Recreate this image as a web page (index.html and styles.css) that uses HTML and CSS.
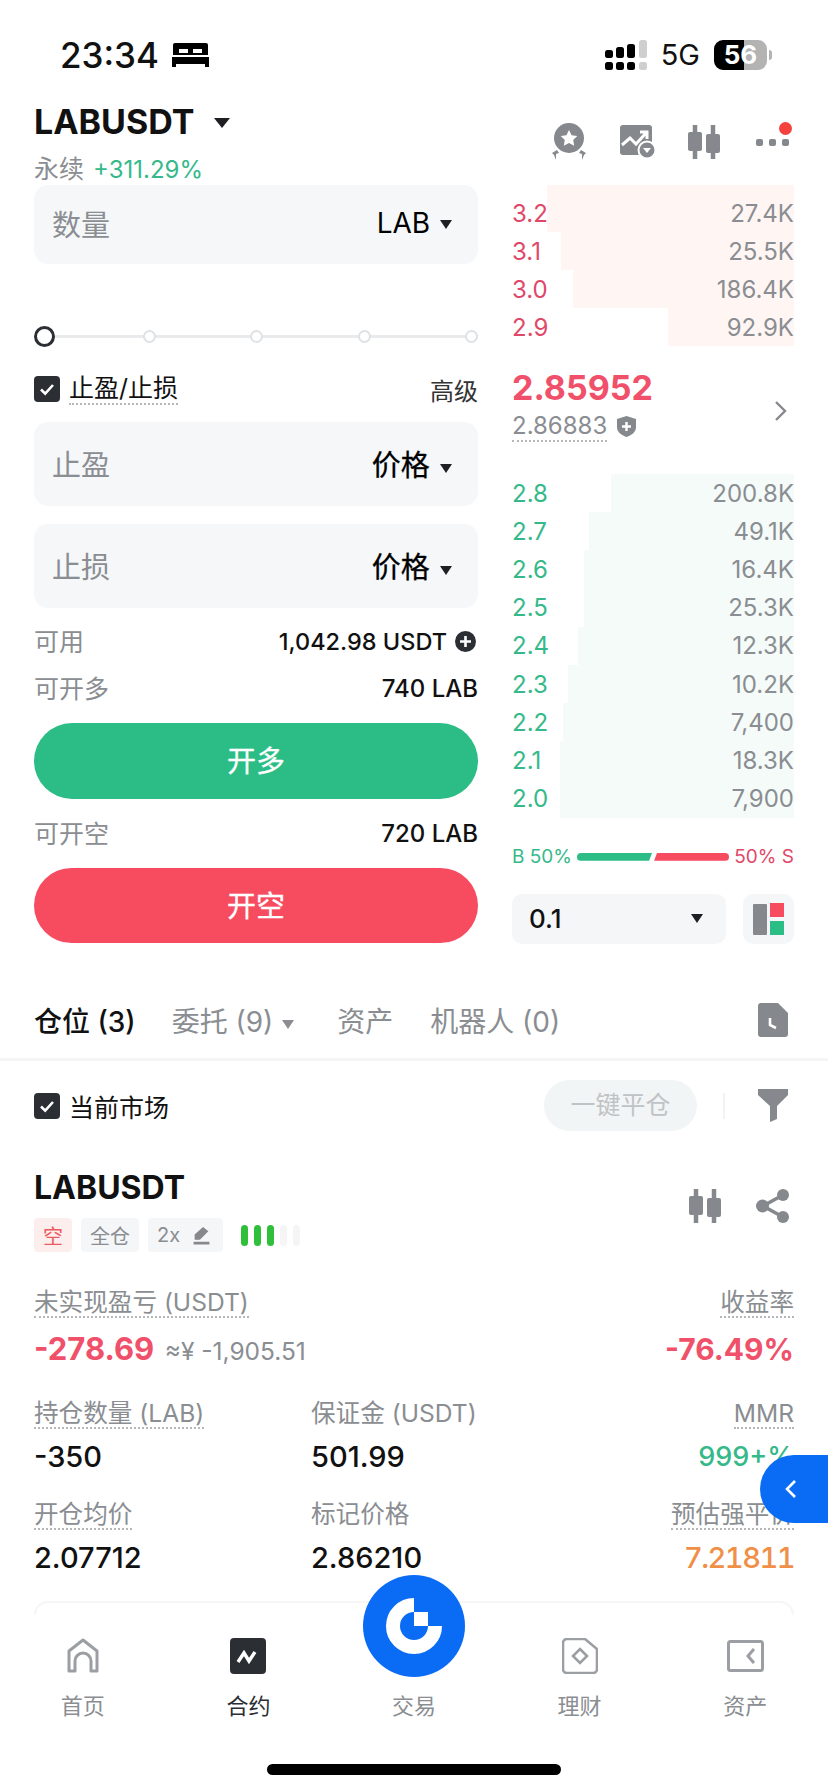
FILE: index.html
```html
<!DOCTYPE html>
<html lang="zh-CN">
<head>
    <meta charset="UTF-8">
    <meta name="viewport" content="width=device-width, initial-scale=1.0">
    <title>LABUSDT</title>
    <link rel="stylesheet" href="styles.css">
</head>
<body>
<svg class="defs" width="0" height="0">
    <symbol id="candles" viewBox="0 0 32 34">
        <path d="M7 0v34M25 0v34" stroke="#85888c" stroke-width="4.5" stroke-linecap="round"/>
        <rect x="0" y="7" width="14" height="19" rx="2" fill="#85888c"/>
        <rect x="18" y="9" width="14" height="19" rx="2" fill="#85888c"/>
    </symbol>
    <symbol id="check" viewBox="0 0 26 26">
        <rect width="26" height="26" rx="4" fill="#2b2e33"/>
        <path d="M7 13.5l4.2 4.2L19 9" fill="none" stroke="#fff" stroke-width="2.6"/>
    </symbol>
</svg>

<div class="phone">
    <!-- Status bar -->
    <div class="status">
        <div class="status-left">
            <span class="time">23:34</span>
            <svg width="37" height="26" viewBox="0 0 37 26"><path d="M3 1h31a2 2 0 0 1 2 2v10H1V3a2 2 0 0 1 2-2zM0 15h37v10h-4v-3H4v3H0z" fill="#000"/><rect x="7" y="7" width="9" height="4" fill="#fff"/><rect x="21" y="7" width="9" height="4" fill="#fff"/></svg>
        </div>
        <div class="status-right">
            <svg width="42" height="30" viewBox="0 0 42 30">
                <rect x="0" y="10" width="8" height="8" rx="2.5"/><rect x="11" y="7" width="8" height="11" rx="2.5"/><rect x="22" y="4" width="8" height="14" rx="2.5"/><rect x="34" y="0" width="8" height="18" rx="2.5" fill="#cfcfcf"/>
                <rect x="0" y="22" width="8" height="8" rx="2.5"/><rect x="11" y="22" width="8" height="8" rx="2.5"/><rect x="22" y="22" width="8" height="8" rx="2.5"/><rect x="34" y="22" width="8" height="8" rx="2.5" fill="#cfcfcf"/>
            </svg>
            <span class="net">5G</span>
            <span class="battery">56</span>
            <i class="battery-tip"></i>
        </div>
    </div>

    <!-- Symbol header -->
    <div class="header">
        <div>
            <div class="symbol">LABUSDT <i class="caret caret-lg"></i></div>
            <div class="symbol-sub"><span class="muted">永续</span> <span class="up">+311.29%</span></div>
        </div>
        <div class="header-icons">
            <svg width="38" height="38" viewBox="0 0 38 38">
                <circle cx="19" cy="15" r="15" fill="#85888c"/>
                <path d="M19 7l2.6 5.2 5.7.8-4.1 4 1 5.7-5.2-2.7-5.2 2.7 1-5.7-4.1-4 5.7-.8z" fill="#fff"/>
                <path d="M2 30l5-3 2 3-3 1 0 6-2-5zM36 30l-5-3-2 3 3 1 0 6 2-5z" fill="#85888c"/>
            </svg>
            <svg width="36" height="34" viewBox="0 0 36 34">
                <rect x="0" y="0" width="32" height="30" rx="3" fill="#85888c"/>
                <path d="M2 20l8-7 6 6 10-11M20 7h7v7" fill="none" stroke="#fff" stroke-width="3"/>
                <circle cx="27" cy="25" r="8.5" fill="#85888c" stroke="#fff" stroke-width="2"/>
                <path d="M23 23h8l-4 5z" fill="#fff"/>
            </svg>
            <svg width="32" height="34"><use href="#candles"/></svg>
            <div class="more">
                <i></i><i></i><i></i>
                <b class="more-dot"></b>
            </div>
        </div>
    </div>

    <div class="trade">
        <!-- Order form -->
        <div class="form">
            <div class="field">
                <span class="field-label">数量</span>
                <span class="field-unit unit-sm">LAB <i class="caret"></i></span>
            </div>
            <div class="slider">
                <i class="knob"></i><i></i><i></i><i></i><i></i>
            </div>
            <div class="check-row">
                <svg class="checkbox"><use href="#check"/></svg>
                <span class="dotted tpsl">止盈/止损</span>
                <span class="adv">高级</span>
            </div>
            <div class="field field-tall field-tp">
                <span class="field-label">止盈</span>
                <span class="field-unit">价格 <i class="caret"></i></span>
            </div>
            <div class="field field-tall field-sl">
                <span class="field-label">止损</span>
                <span class="field-unit">价格 <i class="caret"></i></span>
            </div>
            <div class="info info-avail">
                <span class="muted">可用</span>
                <span class="info-val">1,042.98 USDT
                    <svg width="21" height="21" viewBox="0 0 21 21"><circle cx="10.5" cy="10.5" r="10.5" fill="#2b2e33"/><path d="M10.5 5v11M5 10.5h11" stroke="#fff" stroke-width="2.6"/></svg>
                </span>
            </div>
            <div class="info info-long">
                <span class="muted">可开多</span>
                <span class="info-val">740 LAB</span>
            </div>
            <div class="btn btn-long">开多</div>
            <div class="info info-short">
                <span class="muted">可开空</span>
                <span class="info-val">720 LAB</span>
            </div>
            <div class="btn btn-short">开空</div>
        </div>

        <!-- Order book -->
        <div class="book">
            <div class="asks">
                <div class="row"><i class="depth" style="width:87.6%"></i><span>3.2</span><span class="qty">27.4K</span></div>
                <div class="row"><i class="depth" style="width:82.6%"></i><span>3.1</span><span class="qty">25.5K</span></div>
                <div class="row"><i class="depth" style="width:78.4%"></i><span>3.0</span><span class="qty">186.4K</span></div>
                <div class="row"><i class="depth" style="width:44.7%"></i><span>2.9</span><span class="qty">92.9K</span></div>
            </div>
            <div class="last">
                <div>
                    <div class="last-price">2.85952</div>
                    <div class="mark"><span class="dotted">2.86883</span>
                        <svg width="19" height="21" viewBox="0 0 19 21"><path d="M9.5 0L19 3v8c0 5-4 8-9.5 10C4 19 0 16 0 11V3z" fill="#85888c"/><path d="M9.5 6v9M5 10.5h9" stroke="#fff" stroke-width="2.4"/></svg>
                    </div>
                </div>
                <svg class="chev" width="14" height="22" viewBox="0 0 14 22"><path d="M2 2l9 9-9 9" fill="none" stroke="#85888c" stroke-width="2.4"/></svg>
            </div>
            <div class="bids">
                <div class="row"><i class="depth" style="width:65%"></i><span>2.8</span><span class="qty">200.8K</span></div>
                <div class="row"><i class="depth" style="width:72.7%"></i><span>2.7</span><span class="qty">49.1K</span></div>
                <div class="row"><i class="depth" style="width:74.5%"></i><span>2.6</span><span class="qty">16.4K</span></div>
                <div class="row"><i class="depth" style="width:74.5%"></i><span>2.5</span><span class="qty">25.3K</span></div>
                <div class="row"><i class="depth" style="width:76.6%"></i><span>2.4</span><span class="qty">12.3K</span></div>
                <div class="row"><i class="depth" style="width:80.1%"></i><span>2.3</span><span class="qty">10.2K</span></div>
                <div class="row"><i class="depth" style="width:81.9%"></i><span>2.2</span><span class="qty">7,400</span></div>
                <div class="row"><i class="depth" style="width:83%"></i><span>2.1</span><span class="qty">18.3K</span></div>
                <div class="row"><i class="depth" style="width:83%"></i><span>2.0</span><span class="qty">7,900</span></div>
            </div>
            <div class="ratio">
                <span class="up">B 50%</span>
                <i class="bar bar-buy"></i>
                <i class="bar bar-sell"></i>
                <span class="down">50% S</span>
            </div>
            <div class="book-tools">
                <div class="precision"><span>0.1</span><i class="caret"></i></div>
                <div class="layout-btn">
                    <svg width="31" height="32" viewBox="0 0 31 32"><rect x="0" y="1" width="14" height="31" rx="1" fill="#85888c"/><rect x="17" y="0" width="14" height="14" fill="#f74b60"/><rect x="17" y="18" width="14" height="14" fill="#2bbd85"/></svg>
                </div>
            </div>
        </div>
    </div>

    <!-- Tabs -->
    <div class="tabs">
        <span class="tab tab-active">仓位 (3)</span>
        <span class="tab tab-orders">委托 (9) <i class="caret caret-gray"></i></span>
        <span class="tab tab-assets">资产</span>
        <span class="tab tab-bots">机器人 (0)</span>
        <svg class="tab-doc" width="30" height="34" viewBox="0 0 30 34"><path d="M3 0h17l10 10v21a3 3 0 0 1-3 3H3a3 3 0 0 1-3-3V3a3 3 0 0 1 3-3z" fill="#85888c"/><path d="M12 15v7l6 3" fill="none" stroke="#fff" stroke-width="2.6"/></svg>
    </div>

    <div class="filter">
        <svg class="checkbox"><use href="#check"/></svg>
        <span class="filter-label">当前市场</span>
        <span class="close-all">一键平仓</span>
        <i class="filter-sep"></i>
        <svg width="30" height="33" viewBox="0 0 30 33"><path d="M0 0h30v6L19 17v13l-7 3V17L0 6z" fill="#85888c"/></svg>
    </div>

    <!-- Position card -->
    <div class="position">
        <div class="pos-head">
            <div>
                <div class="pos-symbol">LABUSDT</div>
                <div class="tags">
                    <span class="tag tag-short">空</span>
                    <span class="tag">全仓</span>
                    <span class="tag tag-lev">2x
                        <svg width="19" height="19" viewBox="0 0 17 18"><path d="M10 1l5 4-8 8H2v-5zM1 15h15v2.5H1z" fill="#85888c"/></svg>
                    </span>
                    <span class="risk"><i class="on"></i><i class="on"></i><i class="on"></i><i></i><i></i></span>
                </div>
            </div>
            <div class="pos-icons">
                <svg width="32" height="34"><use href="#candles"/></svg>
                <svg width="34" height="34" viewBox="0 0 34 34"><path d="M27 6L7 17l20 11" fill="none" stroke="#85888c" stroke-width="3.5"/><circle cx="27" cy="6" r="6" fill="#85888c"/><circle cx="6.5" cy="17" r="6.5" fill="#85888c"/><circle cx="27" cy="28" r="6" fill="#85888c"/></svg>
            </div>
        </div>

        <div class="pnl">
            <div>
                <div class="label"><span class="dotted">未实现盈亏 (USDT)</span></div>
                <div class="pnl-val"><b class="down-strong">-278.69</b> <span class="muted pnl-cny">≈¥ -1,905.51</span></div>
            </div>
            <div class="right">
                <div class="label"><span class="dotted">收益率</span></div>
                <div class="pnl-val"><b class="down-strong roe">-76.49%</b></div>
            </div>
        </div>

        <div class="stats">
            <div>
                <div class="label"><span class="dotted">持仓数量 (LAB)</span></div>
                <div class="stat-val">-350</div>
            </div>
            <div>
                <div class="label">保证金 (USDT)</div>
                <div class="stat-val">501.99</div>
            </div>
            <div class="right">
                <div class="label"><span class="dotted">MMR</span></div>
                <div class="stat-val up-strong">999+%</div>
            </div>
            <div>
                <div class="label"><span class="dotted">开仓均价</span></div>
                <div class="stat-val">2.07712</div>
            </div>
            <div>
                <div class="label">标记价格</div>
                <div class="stat-val">2.86210</div>
            </div>
            <div class="right">
                <div class="label"><span class="dotted">预估强平价</span></div>
                <div class="stat-val orange">7.21811</div>
            </div>
        </div>
        <div class="next-card"></div>
    </div>

    <!-- Floating tab on the right edge -->
    <div class="side-tab">
        <svg width="12" height="20" viewBox="0 0 12 20"><path d="M10 2l-8 8 8 8" fill="none" stroke="#fff" stroke-width="2.6"/></svg>
    </div>

    <!-- Bottom navigation -->
    <div class="nav">
        <div class="nav-item">
            <svg width="36" height="36" viewBox="0 0 36 36"><path d="M4 33V13L18 2l14 11v20h-6V23a8 8 0 0 0-16 0v10z" fill="none" stroke="#9b9ea2" stroke-width="3" stroke-linejoin="round"/></svg>
            <span>首页</span>
        </div>
        <div class="nav-item nav-active">
            <svg width="36" height="36" viewBox="0 0 36 36"><rect width="36" height="36" rx="4" fill="#2b2e33"/><path d="M8 24l6-9 5 8 6-9" fill="none" stroke="#fff" stroke-width="3.4"/></svg>
            <span>合约</span>
        </div>
        <div class="nav-item">
            <i class="nav-spacer"></i>
            <span>交易</span>
        </div>
        <div class="nav-item">
            <svg width="36" height="36" viewBox="0 0 36 36"><path d="M5 1h18l12 10v20a4 4 0 0 1-4 4H5a4 4 0 0 1-4-4V5a4 4 0 0 1 4-4z" fill="none" stroke="#9b9ea2" stroke-width="2.6"/><path d="M18 11l7 7-7 7-7-7z" fill="none" stroke="#9b9ea2" stroke-width="2.6"/></svg>
            <span>理财</span>
        </div>
        <div class="nav-item">
            <svg width="37" height="32" viewBox="0 0 37 32"><rect x="1.5" y="1.5" width="34" height="29" rx="2" fill="none" stroke="#9b9ea2" stroke-width="3"/><path d="M27 9l-6 7 6 7" fill="none" stroke="#9b9ea2" stroke-width="3"/></svg>
            <span>资产</span>
        </div>
    </div>

    <div class="fab">
        <svg width="102" height="102" viewBox="0 0 102 102">
            <path d="M51 30A21 21 0 1 0 72 51" fill="none" stroke="#fff" stroke-width="14"/>
            <rect x="51" y="37" width="14" height="14" fill="#fff"/>
        </svg>
    </div>

    <div class="home-bar"></div>
</div>
</body>
</html>
```

FILE: styles.css
```css
* {
    box-sizing: border-box;
}

body {
    margin: 0;
    background: #fff;
    font-family: Inter, "Noto Sans CJK SC", sans-serif;
    color: #111;
}

.defs {
    display: block;
}

.phone {
    position: relative;
    width: 828px;
    height: 1792px;
    overflow: hidden;
    background: #fff;
}

i {
    display: block;
    font-style: normal;
}

.muted { color: #8a8d91; }
.up { color: #35b98a; }
.down { color: #e0486a; }
.right { text-align: right; }

.dotted {
    display: inline-block;
    border-bottom: 2px dotted #b5b7ba;
}

.caret {
    display: inline-block;
    width: 0;
    height: 0;
    border-left: 6.5px solid transparent;
    border-right: 6.5px solid transparent;
    border-top: 9px solid #1d1f22;
    vertical-align: middle;
}

.caret-lg {
    border-left-width: 8px;
    border-right-width: 8px;
    border-top-width: 10px;
    margin-left: 12px;
    vertical-align: 6px;
}

.caret-gray {
    border-left-width: 6px;
    border-right-width: 6px;
    border-top-color: #8a8d91;
}

/* status bar */
.status {
    height: 102px;
    padding: 40px 56px 0 60px;
    display: flex;
    justify-content: space-between;
    align-items: flex-start;
}

.status-left {
    display: flex;
    align-items: center;
    gap: 13px;
    height: 30px;
}

.time {
    font-size: 35px;
    font-weight: 500;
    line-height: 30px;
}

.status-right {
    display: flex;
    align-items: center;
    height: 30px;
}

.net {
    font-size: 29px;
    margin-left: 14px;
    margin-right: 14px;
    line-height: 30px;
}

.battery {
    width: 53px;
    height: 30px;
    border-radius: 9px;
    background: linear-gradient(90deg, #000 56%, #b3b3b3 56%);
    color: #fff;
    font-size: 26px;
    font-weight: 700;
    line-height: 30px;
    text-align: center;
}

.battery-tip {
    width: 3px;
    height: 10px;
    margin-left: 2px;
    background: #b3b3b3;
    border-radius: 0 3px 3px 0;
}

/* header */
.header {
    height: 83px;
    padding: 0 38px 0 34px;
    display: flex;
    justify-content: space-between;
}

.symbol {
    font-size: 34px;
    font-weight: 700;
    line-height: 40px;
}

.symbol-sub {
    margin-top: 12px;
    line-height: 30px;
    font-size: 25px;
}

.symbol-sub .up {
    margin-left: 2px;
    font-size: 24px;
}

.header-icons {
    height: 58px;
    padding-top: 21px;
    display: flex;
    align-items: center;
    gap: 32px;
}

.more {
    position: relative;
    display: flex;
    gap: 6px;
    width: 34px;
    height: 37px;
    margin-left: 4px;
    padding-top: 16px;
}

.more i {
    width: 7px;
    height: 7px;
    border-radius: 2px;
    background: #85888c;
}

.more-dot {
    position: absolute;
    right: -2px;
    top: -1px;
    width: 13px;
    height: 13px;
    border-radius: 50%;
    background: #f4433f;
}

/* trade area */
.trade {
    display: grid;
    grid-template-columns: 444px 282px;
    column-gap: 34px;
    padding: 0 34px;
    height: 758px;
    margin-bottom: 57px;
}

.field {
    height: 79px;
    padding: 0 26px 4px 18px;
    display: flex;
    justify-content: space-between;
    align-items: center;
    background: #f5f7f9;
    border-radius: 14px;
}

.field-tall { height: 84px; padding-bottom: 2px; }
.field-tp { margin-top: 20px; }
.field-sl { margin-top: 18px; }

.field-label {
    font-size: 29px;
    color: #8a8d91;
}

.field-unit {
    font-size: 29px;
    font-weight: 400;
    color: #000;
    -webkit-text-stroke: 0.3px #000;
}

.field-unit .caret {
    margin-left: 2px;
}

.unit-sm {
    font-size: 28px;
    -webkit-text-stroke: 0;
}

.slider {
    margin-top: 62px;
    height: 21px;
    display: flex;
    align-items: center;
    gap: 94.5px;
    background: linear-gradient(#e8eaec, #e8eaec) center / 100% 3px no-repeat;
}

.slider i {
    width: 13px;
    height: 13px;
    border-radius: 50%;
    background: #fff;
    border: 2px solid #dfe2e4;
}

.slider .knob {
    width: 21px;
    height: 21px;
    border: 3px solid #2b2e33;
    margin-right: -7px;
}

.check-row {
    margin-top: 29px;
    height: 26px;
    display: flex;
    align-items: center;
}

.checkbox {
    width: 26px;
    height: 26px;
    flex: none;
}

.tpsl {
    margin-left: 9px;
    font-size: 25px;
    line-height: 30px;
}

.adv {
    margin-left: auto;
    font-size: 24px;
    color: #333;
}

.info {
    height: 34px;
    display: flex;
    justify-content: space-between;
    align-items: center;
    font-size: 25px;
}

.info .muted { padding-bottom: 3px; }

.info-avail { margin-top: 16px; }
.info-long { margin-top: 13px; }
.info-short { margin-top: 17px; }

.info-val {
    display: flex;
    align-items: center;
    gap: 8px;
    font-size: 24px;
    font-weight: 500;
}

.info-avail .info-val {
    padding-right: 2px;
    font-size: 23.5px;
}

.btn {
    margin-top: 18px;
    height: 76px;
    border-radius: 38px;
    color: #fff;
    font-size: 29px;
    font-weight: 400;
    line-height: 78px;
    text-align: center;
    -webkit-text-stroke: 0.3px #fff;
}

.btn-long { background: #2bbd85; }
.btn-short { background: #f74b60; height: 75px; }

/* order book */
.asks .row:first-child {
    height: 47px;
    padding-top: 9px;
}

.row {
    position: relative;
    height: 38px;
    display: flex;
    justify-content: space-between;
    align-items: center;
    font-size: 24px;
}

.row span {
    position: relative;
}

.depth {
    position: absolute;
    top: 0;
    right: 0;
    bottom: 0;
}

.asks .row { color: #e0486a; }
.asks .depth { background: #fff6f4; }
.bids { margin-top: 33px; }
.bids .row { height: 38.2px; color: #35b98a; }
.bids .depth { background: #f5fbf9; }
.qty { color: #8a8d91; }

.last {
    margin-top: 22px;
    height: 73px;
    display: flex;
    justify-content: space-between;
    align-items: center;
}

.last-price {
    font-size: 34px;
    font-weight: 700;
    color: #f0506a;
    line-height: 40px;
}

.mark {
    margin-top: 4px;
    display: flex;
    align-items: center;
    gap: 10px;
    font-size: 24px;
    color: #8a8d91;
}

.mark .dotted { line-height: 28px; }

.chev { margin-right: 6px; margin-top: 12px; }

.ratio {
    margin-top: 25px;
    height: 28px;
    display: flex;
    align-items: center;
    font-size: 19px;
    white-space: nowrap;
}

.bar {
    height: 8px;
    flex: 1;
}

.bar-buy {
    margin-left: 5px;
    background: #2bbd85;
    border-radius: 4px 0 0 4px;
    clip-path: polygon(0 0, 100% 0, 96% 100%, 0 100%);
}

.bar-sell {
    margin-left: 2px;
    margin-right: 5px;
    background: #f74b60;
    border-radius: 0 4px 4px 0;
    clip-path: polygon(4% 0, 100% 0, 100% 100%, 0 100%);
}

.book-tools {
    margin-top: 23px;
    display: flex;
    justify-content: space-between;
}

.precision {
    width: 214px;
    height: 50px;
    padding: 0 23px 0 17px;
    display: flex;
    justify-content: space-between;
    align-items: center;
    background: #f5f6f8;
    border-radius: 10px;
    font-size: 26px;
    font-weight: 500;
}

.layout-btn {
    width: 51px;
    height: 50px;
    display: flex;
    align-items: center;
    justify-content: center;
    background: #f5f6f8;
    border-radius: 10px;
}

/* tabs */
.tabs {
    display: flex;
    align-items: center;
    height: 61px;
    padding: 0 40px 18px 34px;
    border-bottom: 3px solid #f5f5f5;
    font-size: 28px;
    color: #8a8d91;
}

.tab { white-space: nowrap; }
.tab-active { color: #111; font-weight: 500; }
.tab-orders { margin-left: 36px; }
.tab-orders .caret { margin-left: 1px; }
.tab-assets { margin-left: 43px; }
.tab-bots { margin-left: 37px; }
.tab-doc { margin-left: auto; }

.filter {
    margin-top: 19px;
    height: 51px;
    padding: 0 40px 0 34px;
    display: flex;
    align-items: center;
}

.filter-label {
    margin-left: 9px;
    font-size: 25px;
}

.close-all {
    margin-left: auto;
    width: 153px;
    height: 51px;
    border-radius: 26px;
    background: #f2f5f6;
    color: #c0c3c6;
    font-size: 25px;
    line-height: 50px;
    text-align: center;
}

.filter-sep {
    width: 2px;
    height: 26px;
    margin: 0 33px 0 26px;
    background: #f2f3f4;
}

/* position */
.position {
    margin-top: 37px;
    padding: 0 34px;
}

.pos-head {
    display: flex;
    justify-content: space-between;
}

.pos-symbol {
    font-size: 32px;
    font-weight: 700;
    line-height: 40px;
}

.tags {
    margin-top: 10px;
    display: flex;
    align-items: center;
    gap: 9px;
}

.tag {
    height: 34px;
    padding: 0 9px;
    display: flex;
    align-items: center;
    gap: 12px;
    border-radius: 4px;
    background: #f5f6f8;
    color: #8a8d91;
    font-size: 20px;
}

.tag-short {
    background: #fdeeee;
    color: #ea5a5f;
}

.tag-lev {
    padding-right: 12px;
}

.risk {
    margin-left: 9px;
    display: flex;
    gap: 6px;
}

.risk i {
    width: 7px;
    height: 21px;
    border-radius: 4px;
    background: #f5f5f5;
}

.risk .on { background: #2fbf3a; }

.pos-icons {
    padding-top: 21px;
    padding-right: 4px;
    display: flex;
    align-items: flex-start;
    gap: 35px;
}

.label {
    height: 30px;
    font-size: 24.6px;
    line-height: 28px;
    color: #8a8d91;
}

.pnl {
    margin-top: 36px;
    display: flex;
    justify-content: space-between;
}

.pnl-val {
    margin-top: 11px;
    line-height: 40px;
}

.down-strong {
    font-size: 31px;
    font-weight: 700;
    color: #f0506a;
}

.roe { font-size: 30px; }

.pnl-cny {
    margin-left: 6px;
    font-size: 24.5px;
}

.stats {
    margin-top: 25px;
    display: grid;
    grid-template-columns: 277px 1fr auto;
    row-gap: 23px;
}

.stat-val {
    margin-top: 8px;
    font-size: 29px;
    font-weight: 500;
    line-height: 40px;
}

.up-strong {
    color: #35b98a;
    font-size: 27px;
}

.orange {
    color: #f09048;
    font-variant-numeric: tabular-nums;
    letter-spacing: -1.5px;
}

.next-card {
    margin-top: 23px;
    height: 60px;
    border: 2px solid #f6f6f6;
    border-radius: 14px;
}

.side-tab {
    position: absolute;
    top: 1455px;
    right: 0;
    width: 68px;
    height: 68px;
    display: flex;
    align-items: center;
    padding-left: 25px;
    background: #0a6cf5;
    border-radius: 34px 0 0 34px;
}

/* bottom nav */
.nav {
    position: absolute;
    left: 0;
    right: 0;
    bottom: 0;
    height: 177px;
    padding-top: 23px;
    background: #fff;
    display: grid;
    grid-template-columns: repeat(5, 165.6px);
}

.nav-item {
    display: flex;
    flex-direction: column;
    align-items: center;
    justify-content: flex-start;
    font-size: 22px;
    color: #8a8d91;
}

.nav-item svg,
.nav-spacer {
    height: 36px;
}

.nav-item span {
    margin-top: 17px;
    line-height: 30px;
}

.nav-active { color: #2b2e33; }

.fab {
    position: absolute;
    left: 363px;
    top: 1575px;
    width: 102px;
    height: 102px;
    border-radius: 50%;
    background: #0a6cf5;
}

.fab svg { display: block; }

.home-bar {
    position: absolute;
    left: 267px;
    top: 1764px;
    width: 294px;
    height: 11px;
    border-radius: 6px;
    background: #000;
}
```
